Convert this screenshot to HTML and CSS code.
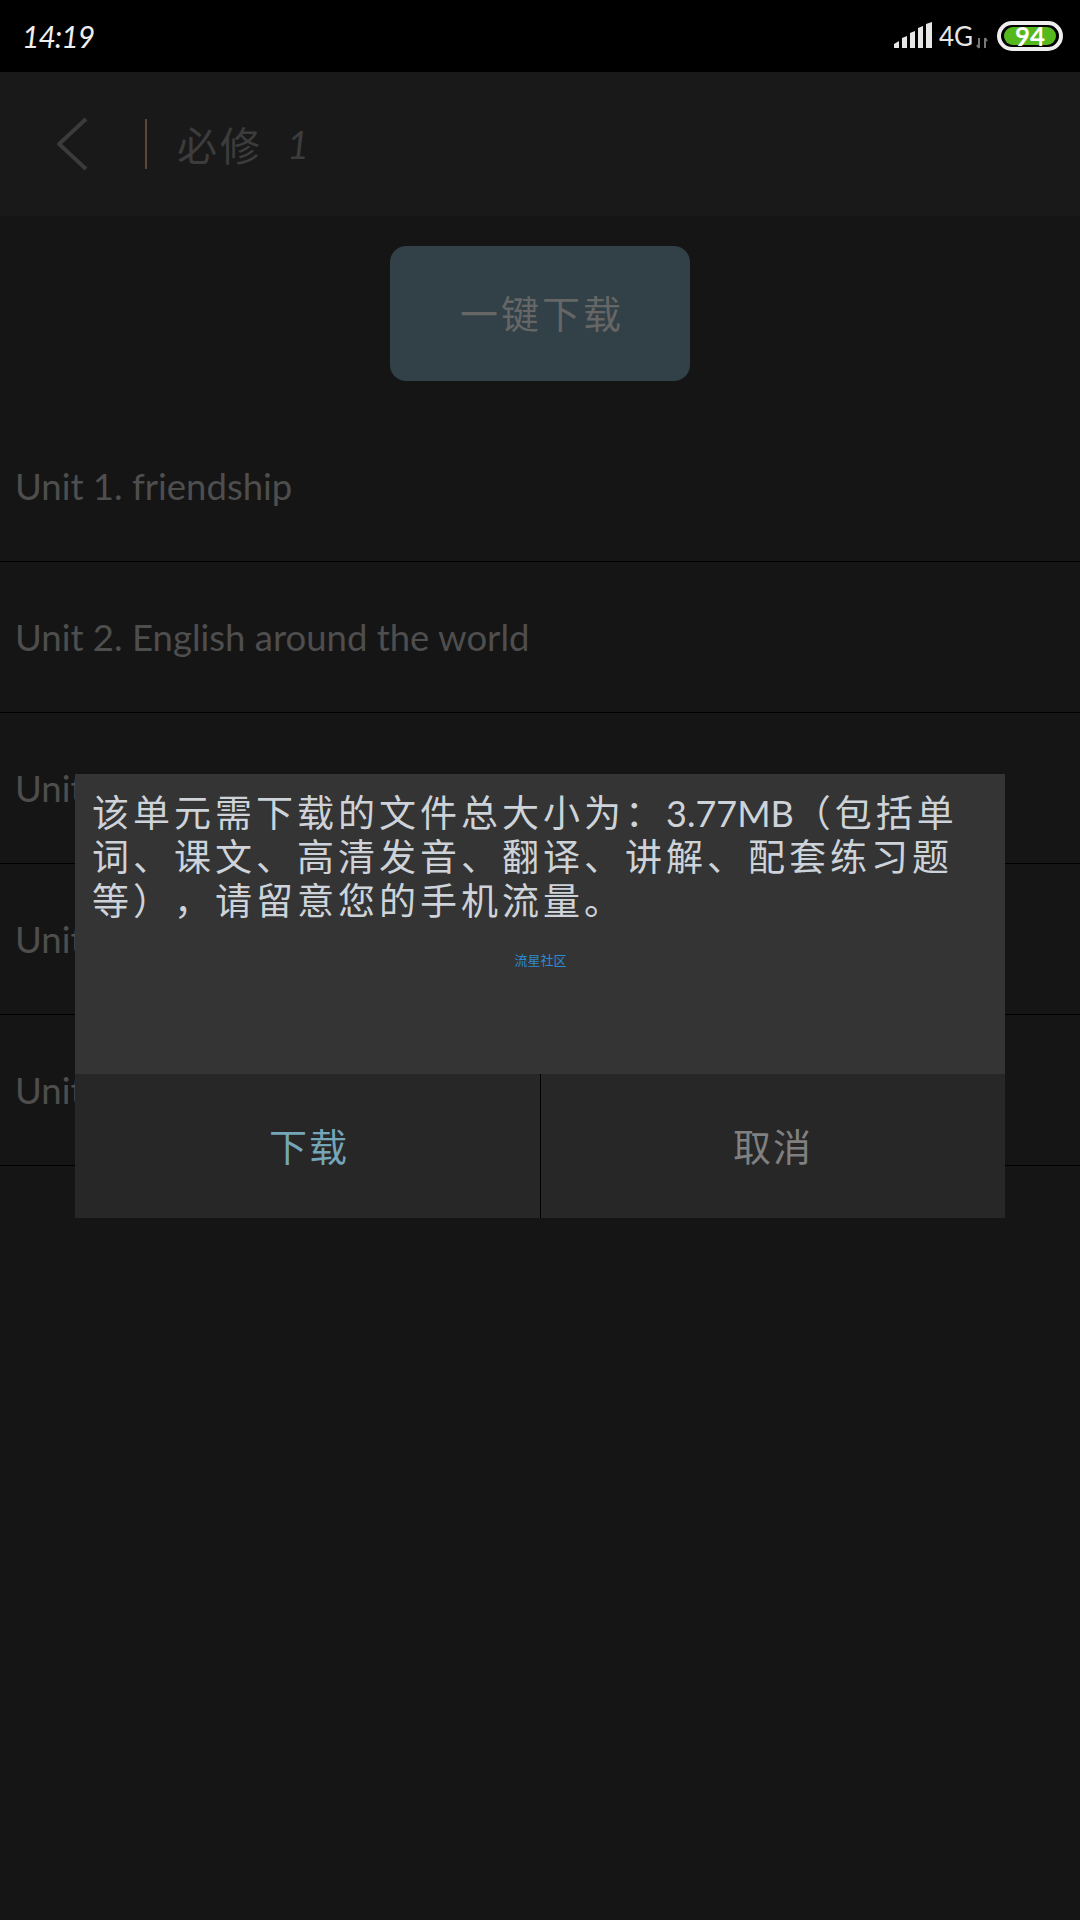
FILE: index.html
```html
<!DOCTYPE html>
<html lang="zh-CN">

<head>
  <meta charset="UTF-8">
  <title>必修 1</title>
  <link rel="stylesheet" href="styles.css">
</head>

<body>
  <div class="statusbar">
    <span class="statusbar__time">14:19</span>
    <div class="statusbar__icons">
      <svg class="signal" width="38" height="26" viewBox="0 0 38 26">
        <path d="M0 26 L0 22 L5 19 L5 26 Z" fill="#e6e6e6"></path>
        <path d="M8 26 L8 16 L13 14 L13 26 Z" fill="#e6e6e6"></path>
        <path d="M16 26 L16 11 L21 9 L21 26 Z" fill="#e6e6e6"></path>
        <path d="M24 26 L24 6 L29 4 L29 26 Z" fill="#e6e6e6"></path>
        <path d="M32 26 L32 2 L38 0 L38 26 Z" fill="#e6e6e6"></path>
      </svg>
      <span class="statusbar__net">4G</span>
      <svg class="arrows" width="12" height="12" viewBox="0 0 12 12">
        <path d="M3 1 L3 11 M1 8 L3 11 M9 11 L9 1 M9 1 L11 4" stroke="#777" stroke-width="2" fill="none"></path>
      </svg>
      <div class="battery"><span class="battery__fill">94</span></div>
    </div>
  </div>

  <div class="toolbar">
    <svg class="toolbar__back" width="32" height="54" viewBox="0 0 32 54">
      <path d="M29 2 L2 27 L29 52" stroke="#3b3b3b" stroke-width="4" fill="none"></path>
    </svg>
    <div class="toolbar__line"></div>
    <span class="toolbar__title">必修</span>
    <span class="toolbar__num">1</span>
  </div>

  <div class="download-wrap">
    <div class="download-btn">一键下载</div>
  </div>

  <ul class="units">
    <li class="unit">Unit 1. friendship</li>
    <li class="unit">Unit 2. English around the world</li>
    <li class="unit">Unit 3</li>
    <li class="unit">Unit 4</li>
    <li class="unit">Unit 5</li>
  </ul>

  <div class="dialog">
    <div class="dialog__body">
      <p class="dialog__text">该单元需下载的文件总大小为：<span class="dialog__size">3.77MB</span>（包括单<br>词、课文、高清发音、翻译、讲解、配套练习题<br>等），请留意您的手机流量。</p>
      <p class="dialog__mark">流星社区</p>
    </div>
    <div class="dialog__buttons">
      <div class="dialog__btn dialog__btn--ok">下载</div>
      <div class="dialog__btn dialog__btn--cancel">取消</div>
    </div>
  </div>
</body>

</html>
```

FILE: styles.css
```css
* {
  box-sizing: border-box;
}

body {
  background-color: #151515;
  font-family: Lato, "Noto Sans CJK SC", sans-serif;
  height: 1920px;
  margin: 0;
  overflow: hidden;
  position: relative;
  text-spacing-trim: space-all;
}

.statusbar {
  align-items: center;
  background-color: #000;
  display: flex;
  height: 72px;
  justify-content: space-between;
  padding: 0 17px 0 22px;
}

.statusbar__time {
  color: #eee;
  font-size: 30px;
  font-style: italic;
  letter-spacing: -1px;
}

.statusbar__icons {
  align-items: center;
  display: flex;
}

.signal {
  margin-top: -2px;
}

.statusbar__net {
  color: #e6e6e6;
  font-size: 26px;
  margin-left: 7px;
}

.arrows {
  align-self: flex-end;
  margin: 0 9px 3px 3px;
}

.battery {
  border: 4px solid #eee;
  border-radius: 15px;
  height: 30px;
  padding: 2px 3px;
  width: 66px;
}

.battery__fill {
  background-color: #55b91d;
  border-radius: 9px;
  color: #fff;
  display: block;
  font-size: 26px;
  font-weight: 700;
  height: 18px;
  line-height: 18px;
  text-align: center;
}

.toolbar {
  align-items: center;
  background-color: #19191a;
  display: flex;
  height: 144px;
  padding-left: 57px;
}

.toolbar__back {
  flex: none;
}

.toolbar__line {
  background-color: #5f4536;
  height: 50px;
  margin-left: 56px;
  width: 2px;
}

.toolbar__title {
  color: #3c3c3c;
  font-size: 40px;
  letter-spacing: 3px;
  margin-left: 30px;
}

.toolbar__num {
  color: #3c3c3c;
  font-size: 38px;
  font-style: italic;
  margin-left: 24px;
}

.download-wrap {
  display: flex;
  justify-content: center;
  padding-top: 30px;
}

.download-btn {
  align-items: center;
  background-color: #314147;
  border-radius: 16px;
  color: #666;
  display: flex;
  font-size: 38px;
  height: 135px;
  justify-content: center;
  letter-spacing: 3px;
  padding: 0 0 4px 4px;
  width: 300px;
}

.units {
  list-style: none;
  margin: 30px 0 0;
  padding: 0;
}

.unit {
  align-items: center;
  border-bottom: 1px solid #000;
  color: #4e4e4e;
  display: flex;
  font-size: 36.5px;
  height: 151px;
  padding-left: 15px;
}

.dialog {
  left: 75px;
  position: absolute;
  top: 774px;
  width: 930px;
}

.dialog__body {
  background-color: #343434;
  height: 300px;
  padding: 17px 16px 0 17px;
}

.dialog__text {
  color: #cdd3d9;
  font-size: 37px;
  letter-spacing: 4px;
  line-height: 44px;
  margin: 0;
}

.dialog__size {
  font-size: 36px;
  letter-spacing: 0;
}

.dialog__mark {
  color: #2e8bd0;
  font-size: 13px;
  line-height: 14px;
  margin: 30px 0 0;
  text-align: center;
}

.dialog__buttons {
  background-color: #272727;
  display: grid;
  grid-template-columns: 466px 1fr;
  height: 144px;
}

.dialog__btn {
  align-items: center;
  display: flex;
  font-size: 38px;
  justify-content: center;
  letter-spacing: 2px;
  padding-bottom: 4px;
}

.dialog__btn--ok {
  border-right: 1px solid #000;
  color: #74a5b8;
  padding-left: 3px;
}

.dialog__btn--cancel {
  color: #808080;
}
```
